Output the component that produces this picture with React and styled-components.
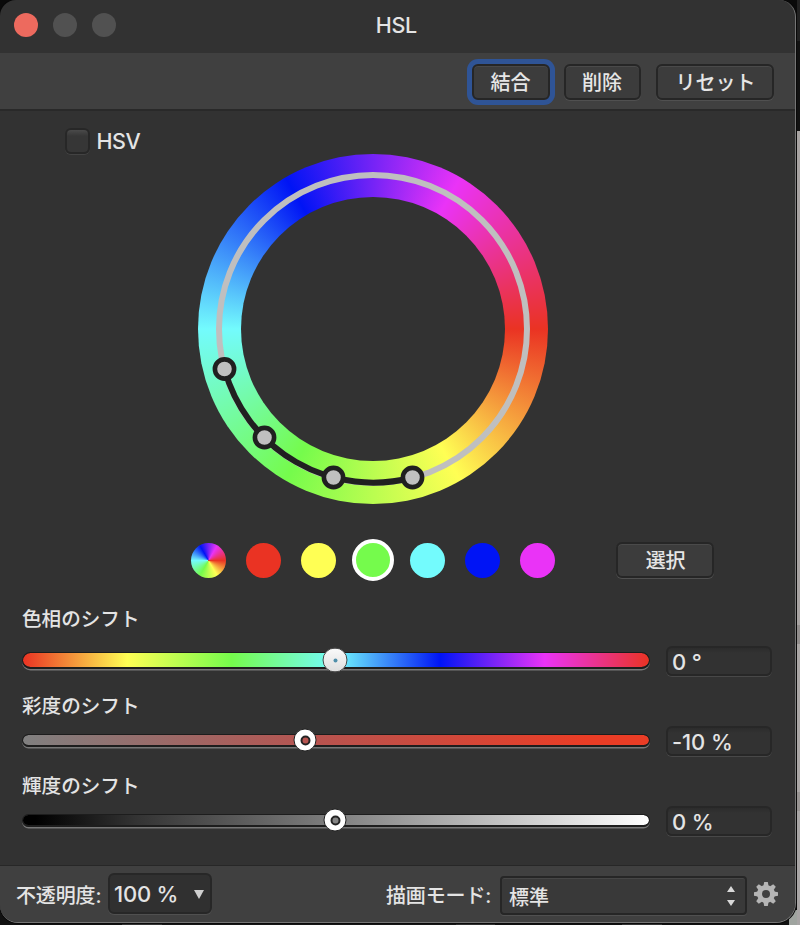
import React from "react";
import styled, { createGlobalStyle } from "styled-components";

const GlobalStyle = createGlobalStyle`
  *, *::after { box-sizing: border-box; }
  body { margin: 0; background: #111; overflow: hidden; }
  button, input { font: inherit; }
`;

const HUES = "#ea3323, #ffff54, #75fb4c, #73fbfd, #0014f5, #ea33f7, #ea3323";

const Desktop = styled.div`
  width: 800px;
  height: 925px;
  overflow: hidden;
  background:
    linear-gradient(#222 0 41px, #121212 41px 131px, #a7a3a2 131px 625px, #918d8c 625px 644px, #aaa6a5 644px 792px, #989493 792px 811px, #a8a5a5 811px) 797px 0 / 3px 925px no-repeat,
    linear-gradient(90deg, #111 0 122px, #343434 122px 162px, #171717 162px 456px, #303030 456px 495px, #111 495px 622px, #343434 622px 662px, #111 662px 789px, #9fa49f 789px) 0 910px / 800px 15px no-repeat,
    #0a0a0a;
  font-family: Inter, "Noto Sans CJK JP", sans-serif;
  font-size: 20px;
  font-weight: 500;
  color: #e4e4e4;
`;

const Window = styled.main`
  width: 796px;
  height: 923px;
  display: flex;
  flex-direction: column;
  overflow: hidden;
  background: #323232;
  border: solid #757575;
  border-width: 0 1px 1px 0;
  border-radius: 16px 17px 20px 18px;
  box-shadow: 0 0 0 1px #090909;
`;

const TitleBar = styled.header`
  height: 53px;
  flex: none;
  display: grid;
  grid-template-columns: 1fr auto 1fr;
  align-items: center;
  padding: 0 16px 3px 13.5px;
`;

const Lights = styled.div`
  display: flex;
  gap: 15.2px;
`;

const Light = styled.span`
  width: 24px;
  height: 24px;
  border-radius: 50%;
  background: ${(p) => (p.$active ? "#ed6a5e" : "#515151")};
`;

const Title = styled.h1`
  margin: 0;
  font-size: 21.5px;
  font-weight: 500;
  line-height: 26px;
  letter-spacing: -0.4px;
`;

const ToolBar = styled.div`
  height: 58px;
  flex: none;
  display: flex;
  align-items: center;
  justify-content: flex-end;
  padding: 1px 21px 0 0;
  background: #404040;
  border-bottom: 2px solid #292929;
`;

const Button = styled.button`
  width: ${(p) => p.$width}px;
  height: 36px;
  margin-left: ${(p) => p.$gap || 0}px;
  padding: ${(p) => (p.$wide ? "2px 0 0 1px" : "2px 1px 0 0")};
  border: 2px solid #262626;
  border-radius: 6px;
  background: #3c3c3c;
  color: #e6e6e6;
  line-height: 30px;
  box-shadow: ${(p) =>
    p.$focused
      ? "0 0 0 5px #2f5496, inset 0 1px #484848"
      : "0 1px #505050, inset 0 1px #4a4a4a"};
`;

const Body = styled.section`
  flex: 1;
  display: flex;
  flex-direction: column;
  padding: 16.5px 23px 0 22px;
`;

const Model = styled.label`
  height: 26px;
  display: flex;
  align-items: center;
  gap: 6.5px;
  padding-left: 42.5px;
  font-size: 21.5px;
  letter-spacing: -0.5px;
`;

const CheckBox = styled.input`
  appearance: none;
  width: 25.5px;
  height: 26px;
  margin: 0;
  border: 2px solid #272727;
  border-radius: 6px;
  background: linear-gradient(#4a4a4a, #363636 6px);
  box-shadow: 0 1px #434343;
`;

const Wheel = styled.div`
  position: relative;
  width: 350px;
  height: 350px;
  margin-left: 176px;
  flex: none;
  display: grid;
  place-items: center;
  border-radius: 50%;
  background: conic-gradient(from 90deg, ${HUES});
`;

const WheelHole = styled.div`
  width: 264px;
  height: 264px;
  border-radius: 50%;
  background: #323232;
`;

const WheelOverlay = styled.svg`
  position: absolute;
  inset: 0;
`;

const SwatchRow = styled.div`
  height: 42px;
  margin-top: 35.5px;
  display: flex;
  align-items: center;
  padding-left: 159px;
`;

const Swatch = styled.button`
  width: ${(p) => (p.$selected ? 42 : 35)}px;
  height: ${(p) => (p.$selected ? 42 : 35)}px;
  margin: 0 ${(p) => (p.$selected ? 6.45 : 9.95)}px;
  padding: 0;
  border: ${(p) => (p.$selected ? "4px solid #fff" : "0")};
  border-radius: 50%;
  background: ${(p) => p.$fill};
`;

const Shift = styled.div`
  margin-top: ${(p) => p.$top}px;
`;

const ShiftLabel = styled.div`
  height: 28px;
  line-height: 29px;
  font-size: 19.6px;
`;

const ShiftRow = styled.div`
  height: 32px;
  margin-top: ${(p) => p.$gap}px;
  display: flex;
  align-items: center;
  justify-content: space-between;
`;

const Track = styled.div`
  position: relative;
  width: 628px;
  height: ${(p) => (p.$large ? 17 : 13)}px;
  margin-bottom: 1px;
  border: 1px solid #1d1d1d;
  border-bottom-width: 2px;
  border-radius: 9px;
  background: ${(p) => p.$fill} padding-box;
  box-shadow: 0 1.5px #777;
`;

const Thumb = styled.span`
  position: absolute;
  top: 50%;
  left: ${(p) => p.$at}px;
  width: ${(p) => (p.$solid ? 25 : 23)}px;
  height: ${(p) => (p.$solid ? 25 : 23)}px;
  transform: translate(-50%, -50%);
  display: grid;
  place-items: center;
  border: 1px solid ${(p) => (p.$solid ? "#4b4b4b" : "#222")};
  border-radius: 50%;
  background: ${(p) => (p.$solid ? "linear-gradient(#fafafa, #dedede)" : "#fff")};
  &::after {
    content: "";
    width: ${(p) => (p.$solid ? 4 : 10)}px;
    height: ${(p) => (p.$solid ? 4 : 10)}px;
    border: ${(p) => (p.$solid ? "0" : "2px solid #242424")};
    border-radius: 50%;
    background: ${(p) => p.$core};
  }
`;

const Value = styled.div`
  width: 106px;
  height: 30px;
  margin-bottom: 1px;
  padding: 1px 0 0 4px;
  border: 2px solid #272727;
  border-radius: 6px;
  background: linear-gradient(#2c2c2c, #323232 5px);
  box-shadow: 0 1px #484848;
  font-size: 22px;
  line-height: 26px;
  letter-spacing: -0.1px;
`;

const Footer = styled.footer`
  height: 57px;
  flex: none;
  display: flex;
  align-items: center;
  padding: 0 16px 0 16px;
  background: #404040;
  border-top: 1px solid #272727;
`;

const FooterLabel = styled.span`
  width: ${(p) => p.$width}px;
  margin-left: ${(p) => p.$gap || 0}px;
  padding-top: 4px;
  line-height: 28px;
  white-space: nowrap;
  letter-spacing: -0.15px;
`;

const Opacity = styled.div`
  width: 104px;
  height: 41px;
  margin-bottom: 2px;
  display: flex;
  align-items: center;
  justify-content: space-between;
  padding: 2px 6px 0 4px;
  border: 2px solid #272727;
  border-radius: 6px;
  background: #303030;
  box-shadow: 0 1px #505050;
  font-size: 22px;
  letter-spacing: -0.2px;
`;

const BlendMode = styled.div`
  width: 247px;
  height: 39px;
  margin-top: 3px;
  display: flex;
  align-items: center;
  justify-content: space-between;
  padding: 1px 10px 0 7px;
  border: 2px solid #262626;
  border-radius: 4px;
  background: #393939;
  box-shadow: 0 1px #505050, inset 0 1px #464646;
`;

const Gear = styled.svg`
  margin: 0 0 0 7px;
  flex: none;
`;

const SWATCHES = [
  `conic-gradient(from 90deg, ${HUES})`,
  "#ea3323",
  "#ffff54",
  "#75fb4c",
  "#73fbfd",
  "#0014f5",
  "#ea33f7",
];

const SHIFTS = [
  { label: "色相のシフト", value: "0 °", at: 312, top: 24, gap: 12, solid: true, core: "#4f8faa", fill: `linear-gradient(90deg, ${HUES})` },
  { label: "彩度のシフト", value: "-10 %", at: 282, top: 15, gap: 5, core: "#b75450", fill: "linear-gradient(90deg, #808080, #b75450 46%, #ea3d26 90%)" },
  { label: "輝度のシフト", value: "0 %", at: 312, top: 15, gap: 5, core: "#858585", fill: "linear-gradient(90deg, #000 2%, #333 18%, #808080 50%, #fff)" },
];

const NODES = [[26.5, 215], [66.5, 283.5], [135.5, 323.5], [214.5, 323.5]];

export default function App() {
  return (
    <Desktop>
      <GlobalStyle />
      <Window>
        <TitleBar>
          <Lights>
            <Light $active />
            <Light />
            <Light />
          </Lights>
          <Title>HSL</Title>
        </TitleBar>
        <ToolBar>
          <Button $width={78} $focused>結合</Button>
          <Button $width={77} $gap={14}>削除</Button>
          <Button $width={118} $gap={15} $wide>リセット</Button>
        </ToolBar>
        <Body>
          <Model>
            <CheckBox type="checkbox" />
            HSV
          </Model>
          <Wheel>
            <WheelHole />
            <WheelOverlay viewBox="0 0 350 350" fill="none">
              <circle cx="175" cy="175" r="154" stroke="#bfbfbf" strokeWidth="6" />
              <path d="M26.5 215A154 154 0 0 0 214.5 323.5" stroke="#202020" strokeWidth="6" />
              {NODES.map(([x, y]) => (
                <circle key={x} cx={x} cy={y} r="9.6" fill="#c0c0c0" stroke="#202020" strokeWidth="4.6" />
              ))}
            </WheelOverlay>
          </Wheel>
          <SwatchRow>
            {SWATCHES.map((fill, i) => (
              <Swatch key={fill} $fill={fill} $selected={i === 3} />
            ))}
            <Button $width={98} $gap={51} $wide>選択</Button>
          </SwatchRow>
          {SHIFTS.map((s) => (
            <Shift key={s.label} $top={s.top}>
              <ShiftLabel>{s.label}</ShiftLabel>
              <ShiftRow $gap={s.gap}>
                <Track $fill={s.fill} $large={s.solid}>
                  <Thumb $at={s.at} $solid={s.solid} $core={s.core} />
                </Track>
                <Value>{s.value}</Value>
              </ShiftRow>
            </Shift>
          ))}
        </Body>
        <Footer>
          <FooterLabel $width={92}>不透明度:</FooterLabel>
          <Opacity>
            100 %
            <svg width="10" height="9" viewBox="0 0 10 9"><path d="M0 0H10L5 9Z" fill="#cfcfcf" /></svg>
          </Opacity>
          <FooterLabel $width={114} $gap={174}>描画モード:</FooterLabel>
          <BlendMode>
            標準
            <svg width="8" height="20" viewBox="0 0 8 20"><path d="M0 6L4 0L8 6ZM0 14H8L4 20Z" fill="#d8d8d8" /></svg>
          </BlendMode>
          <Gear width="24" height="24" viewBox="-12 -12 24 24">
            <circle r="6.5" fill="none" stroke="#b5b5b5" strokeWidth="5" />
            {[0, 45, 90, 135, 180, 225, 270, 315].map((a) => (
              <path key={a} d="M-2.6 -8L-1.8 -12H1.8L2.6 -8Z" fill="#b5b5b5" transform={`rotate(${a})`} />
            ))}
          </Gear>
        </Footer>
      </Window>
    </Desktop>
  );
}
